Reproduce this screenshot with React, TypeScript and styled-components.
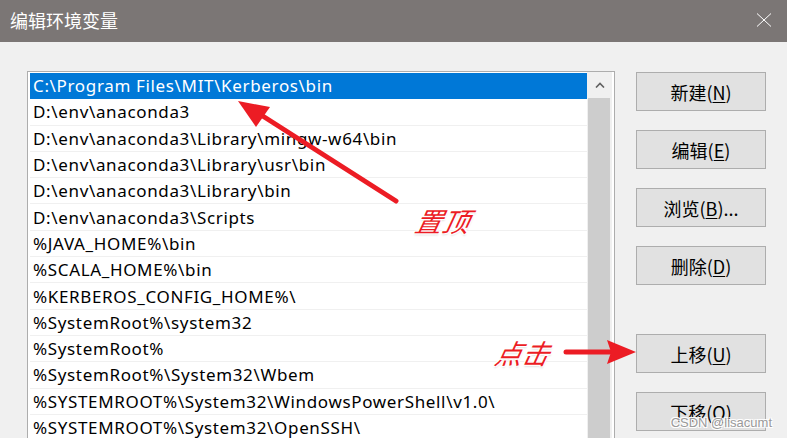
import React from 'react';
import styled, { createGlobalStyle } from 'styled-components';

const GlobalStyle = createGlobalStyle`
  html, body {
    margin: 0;
    padding: 0;
    background: #f0f0f0;
    overflow: hidden;
  }
`;

const Window = styled.div`
  position: relative;
  width: 787px;
  height: 438px;
  overflow: hidden;
  background: #f0f0f0;
  font-family: "Noto Sans CJK SC", "Noto Sans", sans-serif;
`;

const TitleBar = styled.div`
  height: 42px;
  background: #7b7675;
  display: flex;
  align-items: center;
  justify-content: space-between;
  padding: 0 15px 0 10px;
  box-sizing: border-box;
`;

const Title = styled.span`
  color: #ffffff;
  font-size: 18px;
  line-height: 1;
  margin-top: -2px;
`;

const CloseIcon = styled.svg`
  width: 16px;
  height: 14px;
  margin-top: -3px;
`;

const Body = styled.div`
  display: flex;
  align-items: flex-start;
  padding: 29px 21px 0 27px;
  gap: 21px;
`;

const ListBox = styled.div`
  width: 588px;
  height: 380px;
  box-sizing: border-box;
  border: 1px solid #adadad;
  border-bottom: none;
  background: #ffffff;
  display: flex;
  padding: 1px 2px 0 2px;
`;

const Rows = styled.div`
  flex: 1;
  display: flex;
  flex-direction: column;
`;

const Row = styled.div<{ selected?: boolean }>`
  height: 26.3px;
  flex: none;
  box-sizing: border-box;
  display: flex;
  align-items: center;
  padding-left: 3px;
  font-family: "Noto Sans", "Noto Sans CJK SC", sans-serif;
  font-size: 17px;
  letter-spacing: 0.65px;
  white-space: nowrap;
  color: ${(p) => (p.selected ? '#ffffff' : '#000000')};
  background: ${(p) => (p.selected ? '#0078d7' : '#ffffff')};
  border-bottom: 1px solid ${(p) => (p.selected ? '#0078d7' : '#f0f0f0')};
`;

const ScrollBar = styled.div`
  width: 25px;
  display: flex;
  flex-direction: column;
  background: #f0f0f0;
  margin-top: -1px;
`;

const ScrollButton = styled.div`
  height: 26px;
  display: flex;
  align-items: center;
  justify-content: center;
  background: #f0f0f0;
`;

const ScrollThumb = styled.div`
  flex: 1;
  margin: 0 2px 0 1px;
  background: #cdcdcd;
`;

const Buttons = styled.div`
  display: flex;
  flex-direction: column;
  gap: 19px;
  padding-top: 1px;
`;

const Button = styled.div<{ extraTop?: boolean }>`
  width: 130px;
  height: 39px;
  box-sizing: border-box;
  background: #e1e1e1;
  border: 1px solid #adadad;
  display: flex;
  align-items: center;
  justify-content: center;
  font-size: 18px;
  color: #000000;
  margin-top: ${(p) => (p.extraTop ? '30px' : '0')};
`;

const Key = styled.span`
  text-decoration: underline;
  text-underline-offset: 2px;
  text-decoration-thickness: 1px;
`;

const Overlay = styled.svg`
  position: absolute;
  left: 0;
  top: 0;
  width: 787px;
  height: 438px;
  pointer-events: none;
`;

const Note = styled.span<{ x: number; y: number }>`
  position: absolute;
  left: ${(p) => p.x}px;
  top: ${(p) => p.y}px;
  color: #ec1c24;
  font-size: 27px;
  font-style: italic;
  line-height: 1;
  font-family: "Noto Sans CJK SC", sans-serif;
  transform: skewX(-12deg);
  text-shadow: 1px 1px 0 #fff, -1px -1px 0 #fff, 1px -1px 0 #fff, -1px 1px 0 #fff,
    0 2px 2px #ddd;
`;

const Watermark = styled.span`
  position: absolute;
  right: 15px;
  bottom: 8px;
  font-family: "Liberation Sans", Arial, sans-serif;
  font-size: 13px;
  color: #9a9a9a;
  text-shadow: 1px 1px 0 #fff, -1px -1px 0 #fff, 1px -1px 0 #fff, -1px 1px 0 #fff;
`;

const paths = [
  'C:\\Program Files\\MIT\\Kerberos\\bin',
  'D:\\env\\anaconda3',
  'D:\\env\\anaconda3\\Library\\mingw-w64\\bin',
  'D:\\env\\anaconda3\\Library\\usr\\bin',
  'D:\\env\\anaconda3\\Library\\bin',
  'D:\\env\\anaconda3\\Scripts',
  '%JAVA_HOME%\\bin',
  '%SCALA_HOME%\\bin',
  '%KERBEROS_CONFIG_HOME%\\',
  '%SystemRoot%\\system32',
  '%SystemRoot%',
  '%SystemRoot%\\System32\\Wbem',
  '%SYSTEMROOT%\\System32\\WindowsPowerShell\\v1.0\\',
  '%SYSTEMROOT%\\System32\\OpenSSH\\',
];

const buttons: { label: string; key: string; tail?: string; extraTop?: boolean }[] = [
  { label: '新建', key: 'N' },
  { label: '编辑', key: 'E' },
  { label: '浏览', key: 'B', tail: '...' },
  { label: '删除', key: 'D' },
  { label: '上移', key: 'U', extraTop: true },
  { label: '下移', key: 'O' },
];

export default function App() {
  return (
    <Window>
      <GlobalStyle />
      <TitleBar>
        <Title>编辑环境变量</Title>
        <CloseIcon viewBox="0 0 16 14">
          <path d="M1 0.5 L15 13.5 M15 0.5 L1 13.5" stroke="#ffffff" strokeWidth="1" fill="none" />
        </CloseIcon>
      </TitleBar>
      <Body>
        <ListBox>
          <Rows>
            {paths.map((p, i) => (
              <Row key={i} selected={i === 0}>
                {p}
              </Row>
            ))}
          </Rows>
          <ScrollBar>
            <ScrollButton>
              <svg width="10" height="6" viewBox="0 0 10 6">
                <path d="M1 5.5 L5 1.5 L9 5.5" stroke="#606060" strokeWidth="1.6" fill="none" />
              </svg>
            </ScrollButton>
            <ScrollThumb />
          </ScrollBar>
        </ListBox>
        <Buttons>
          {buttons.map((b) => (
            <Button key={b.key} extraTop={b.extraTop}>
              {b.label}(<Key>{b.key}</Key>){b.tail}
            </Button>
          ))}
        </Buttons>
      </Body>

      <Overlay viewBox="0 0 787 438">
        <line x1="396" y1="201" x2="258" y2="113" stroke="#ec1c24" strokeWidth="5" strokeLinecap="round" />
        <polygon points="238,101 270,107 256,127" fill="#ec1c24" />
        <line x1="566" y1="352" x2="612" y2="352" stroke="#ec1c24" strokeWidth="5" strokeLinecap="round" />
        <polygon points="636,352 607,340 611,352 607,364" fill="#ec1c24" />
      </Overlay>
      <Note x={416} y={207}>置顶</Note>
      <Note x={496} y={339}>点击</Note>
      <Watermark>CSDN @lisacumt</Watermark>
    </Window>
  );
}
